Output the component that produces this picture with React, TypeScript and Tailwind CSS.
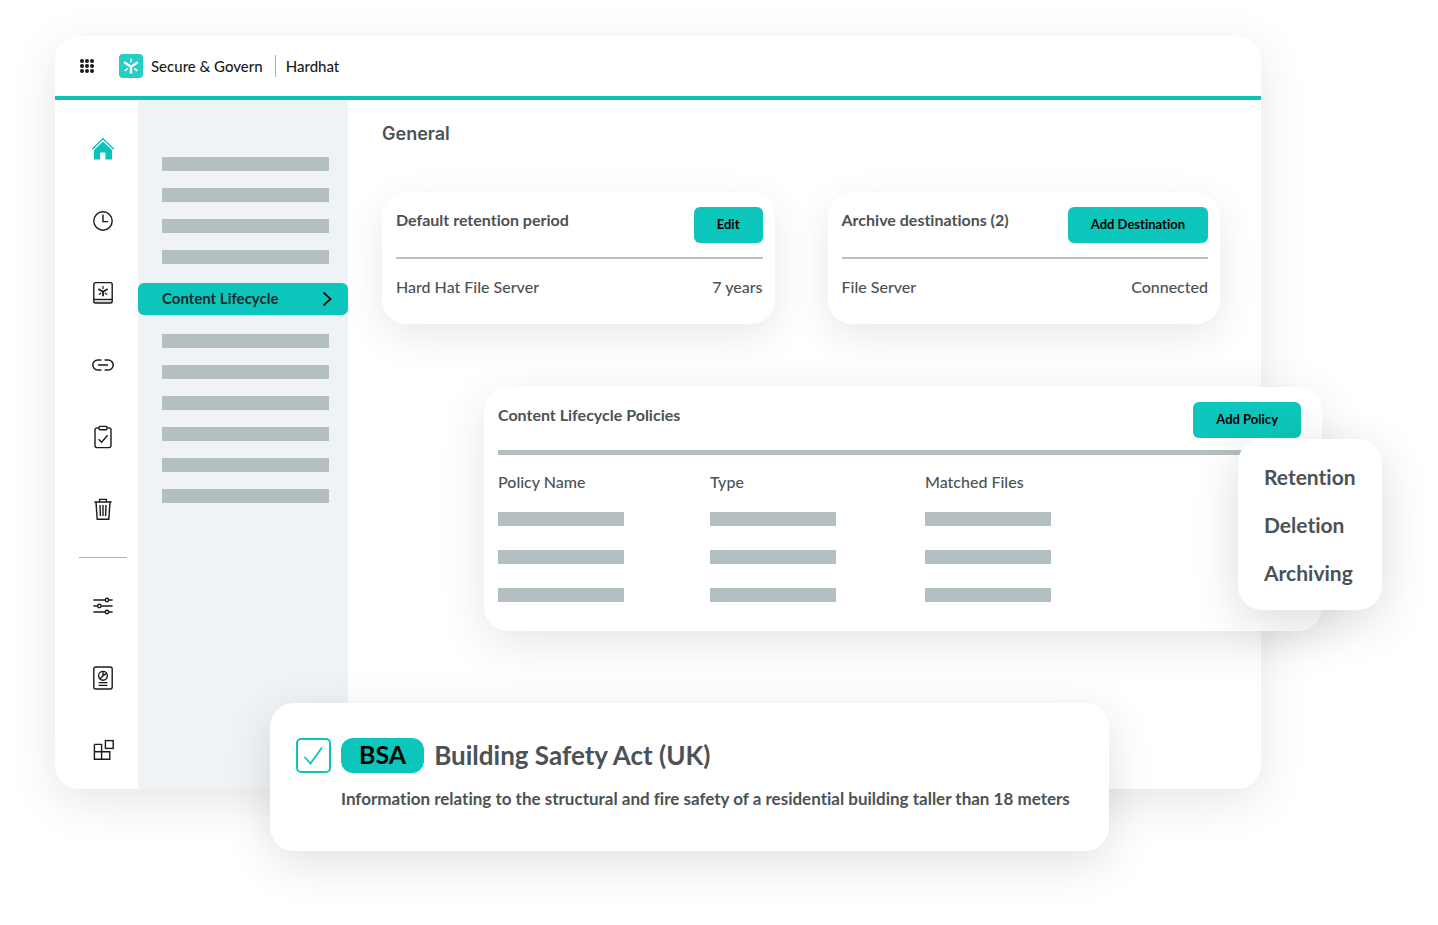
import React, { useState } from 'react';

type IconProps = { className?: string };

const Star: React.FC<IconProps> = ({ className }) => (
  <svg viewBox="0 0 24 24" fill="none" stroke="currentColor" className={className}>
    <path d="M12 12.4V19.6M12 12.8 5.2 8.2M12 12.8l6.8-4.6" strokeWidth="2.4" />
    <path d="M12 4.4v4M5.6 16.8l3.4-2.4M18.4 16.800l-3.400-2.400" strokeWidth="1.5" />
  </svg>
);

const HomeIcon = () => (
  <svg width="24" height="24" viewBox="0 0 24 24" fill="none">
    <path d="M1.2 12.2 12 1.8l10.8 10.4" stroke="#0dc3b7" strokeWidth="1.5" />
    <path d="M12 4.6 3 13v9.4h6.2v-7h5.2v7H21V13z" fill="#0dc3b7" />
  </svg>
);

const ClockIcon = () => (
  <svg width="24" height="24" viewBox="0 0 24 24" fill="none" stroke="#1a1a1a" strokeWidth="1.4">
    <circle cx="12" cy="12" r="9.2" />
    <path d="M12 5.4v7.2h5.2" />
  </svg>
);

const BookIcon = () => (
  <svg width="24" height="24" viewBox="0 0 24 24" fill="none" stroke="#1a1a1a" strokeWidth="1.4">
    <path d="M2.8 18.2h18.4v3.4H2.8z" fill="#d5d5d5" stroke="none" />
    <rect x="2.8" y="1.6" width="18.4" height="20.4" rx="1.8" />
    <path d="M2.8 18.4h18.4" strokeWidth="1.2" />
    <path d="M12 10.6v4.6M12 10.800 7.400 8M12 10.800l4.600-2.800" strokeWidth="1.8" />
    <path d="M12 5v3M7.800 13.600l2.400-1.600M16.200 13.600l-2.400-1.600" strokeWidth="1.2" />
  </svg>
);

const LinkIcon = () => (
  <svg width="24" height="24" viewBox="0 0 24 24" fill="none" stroke="#1a1a1a" strokeWidth="1.5">
    <path d="M10.4 7H6.8a5 5 0 0 0 0 10h3.6M13.6 7h3.6a5 5 0 0 1 0 10h-3.6M7 12h10" />
  </svg>
);

const ClipboardIcon = () => (
  <svg width="24" height="24" viewBox="0 0 24 24" fill="none" stroke="#1a1a1a" strokeWidth="1.4">
    <path d="M8.2 2.9H6a2 2 0 0 0-2 2v15.700a2 2 0 0 0 2 2h12a2 2 0 0 0 2-2V4.900a2 2 0 0 0-2-2h-2.200" />
    <rect x="8" y="1.400" width="8" height="3.400" rx="1" />
    <path d="m7.600 14.200 3 3 6-7" />
  </svg>
);

const TrashIcon = () => (
  <svg width="24" height="24" viewBox="0 0 24 24" fill="none" stroke="#1a1a1a" strokeWidth="1.4">
    <path d="M3.400 5h17.200M8.600 5V2.400h6.800V5M5 5l1.200 17.200h11.600L19 5M9 8l.4 11M12 8v11M15 8l-.4 11" />
  </svg>
);

const SlidersIcon = () => (
  <svg width="24" height="24" viewBox="0 0 24 24" fill="none" stroke="#1a1a1a" strokeWidth="1.4">
    <path d="M2.400 6h11.800M18 6h3.600M2.400 12h4M10.200 12h11.400M2.400 18h11.800M18 18h3.600" />
    <circle cx="16" cy="6" r="1.700" />
    <circle cx="8.300" cy="12" r="1.700" />
    <circle cx="16" cy="18" r="1.700" />
  </svg>
);

const ReportIcon = () => (
  <svg width="24" height="24" viewBox="0 0 24 24" fill="none" stroke="#1a1a1a" strokeWidth="1.4">
    <rect x="2.800" y="1" width="18.400" height="22" rx="2" />
    <circle cx="12" cy="9.800" r="4.400" />
    <path d="M12 5.400v4.400l3.400-2.400M12 9.800l-3 3M7.600 16.600h8.800M7.600 19.400h8.800" />
  </svg>
);

const BlocksIcon = () => (
  <svg width="24" height="24" viewBox="0 0 24 24" fill="none" stroke="#1a1a1a" strokeWidth="1.4">
    <path d="M3.400 6.400h7.200v14.800M3.400 6.400v14.800h15.400v-7.400H3.400" />
    <rect x="14.400" y="2.600" width="7.800" height="7.800" />
  </svg>
);

const mainNav = [
  { name: 'Home', icon: HomeIcon },
  { name: 'Recent', icon: ClockIcon },
  { name: 'Library', icon: BookIcon },
  { name: 'Links', icon: LinkIcon },
  { name: 'Tasks', icon: ClipboardIcon },
  { name: 'Trash', icon: TrashIcon },
];

const toolsNav = [
  { name: 'Settings', icon: SlidersIcon },
  { name: 'Reports', icon: ReportIcon },
  { name: 'Apps', icon: BlocksIcon },
];

const NavButton: React.FC<{ name: string; icon: React.FC }> = ({ name, icon: Icon }) => (
  <button type="button" aria-label={name} className="flex size-12 items-center justify-center">
    <Icon />
  </button>
);

const PlaceholderLinks: React.FC<{ count: number }> = ({ count }) => (
  <div className="flex flex-col gap-[17px] pl-6 pr-[19px]">
    {Array.from({ length: count }, (_, i) => (
      <div key={i} className="h-[14px] bg-[#b4bfc1]" />
    ))}
  </div>
);

const ActionButton: React.FC<{ children: React.ReactNode }> = ({ children }) => (
  <button
    type="button"
    className="h-9 shrink-0 rounded-md bg-[#0dc6bb] px-[23px] text-[13px] font-bold whitespace-nowrap text-black"
  >
    {children}
  </button>
);

interface InfoCardProps {
  title: string;
  action: string;
  label: string;
  value: string;
}

const InfoCard: React.FC<InfoCardProps> = ({ title, action, label, value }) => (
  <section className="rounded-3xl bg-white pt-[15px] pr-3 pb-[25px] pl-[14px] shadow-[0_12px_40px_rgba(0,0,0,0.09)]">
    <div className="flex items-start justify-between border-b-2 border-[#bdc1c2] pb-[14px]">
      <h2 className="text-[16px] leading-[26px] font-bold">{title}</h2>
      <ActionButton>{action}</ActionButton>
    </div>
    <div className="mt-4 flex justify-between text-[16px] leading-6 font-medium">
      <span>{label}</span>
      <span>{value}</span>
    </div>
  </section>
);

const App: React.FC = () => {
  const [checked, setChecked] = useState(true);

  return (
    <div className="min-h-screen bg-white pt-9 pr-[177px] pb-[74px] pl-[55px] font-['Lato','Liberation_Sans',sans-serif] text-[#4b5254] [font-variant-ligatures:none]">
      <div className="rounded-3xl bg-white shadow-[0_12px_48px_rgba(0,0,0,0.1)]">
        <header className="flex h-16 items-center border-b-4 border-[#0dc3b7] pl-6 text-[15px] font-medium text-[#1a1a1a]">
          <button type="button" aria-label="Apps menu">
            <svg width="16" height="16" viewBox="0 0 16 16" fill="#1a1a1a">
              {[3, 8, 13].map((y) => [3, 8, 13].map((x) => <circle key={`${x}-${y}`} cx={x} cy={y} r="2" />))}
            </svg>
          </button>
          <div className="ml-6 flex size-6 items-center justify-center rounded bg-[#26cdc2] text-white">
            <Star className="size-6" />
          </div>
          <span className="ml-2">Secure &amp; Govern</span>
          <span className="ml-3 border-l border-[#b0b0b0] pl-[10px]">Hardhat</span>
        </header>

        <div className="flex">
          <nav className="flex w-[83px] shrink-0 flex-col gap-6 pt-[25px] pb-[15px] pl-6">
            {mainNav.map((item) => (
              <NavButton key={item.name} {...item} />
            ))}
            <div className="h-px w-12 bg-[#b0b0b0]" />
            {toolsNav.map((item) => (
              <NavButton key={item.name} {...item} />
            ))}
          </nav>

          <aside className="w-[210px] shrink-0 bg-[#eff3f6] pt-[57px]">
            <PlaceholderLinks count={4} />
            <a
              href="#content-lifecycle"
              className="my-[19px] flex h-8 items-center justify-between rounded-md bg-[#0dc6bb] pr-4 pl-6 text-[15px] leading-5 font-bold text-[#1a2b2d]"
            >
              <span className="pb-[3px]">Content Lifecycle</span>
              <svg width="10" height="16" viewBox="0 0 10 16" fill="none" stroke="#111" strokeWidth="1.8">
                <path d="m1.500 1.500 7 6.500-7 6.500" />
              </svg>
            </a>
            <PlaceholderLinks count={6} />
          </aside>

          <main className="min-w-0 flex-1 pt-[22px] pr-[41px] pl-[34px]">
            <h1 className="font-['Inter','Liberation_Sans',sans-serif] text-[18px] leading-6 font-semibold">General</h1>

            <div className="mt-[46px] grid grid-cols-2 gap-[53px]">
              <InfoCard title="Default retention period" action="Edit" label="Hard Hat File Server" value="7 years" />
              <InfoCard title="Archive destinations (2)" action="Add Destination" label="File Server" value="Connected" />
            </div>

            <section className="relative mt-[63px] -mr-[102px] ml-[102px] rounded-3xl bg-white pt-[15px] pr-[21px] pb-[17px] pl-[14px] shadow-[0_12px_48px_rgba(0,0,0,0.1)]">
              <div className="flex items-start justify-between border-b-[5px] border-[#b4bfc1] pb-3">
                <h2 className="text-[16px] leading-[26px] font-bold">Content Lifecycle Policies</h2>
                <ActionButton>Add Policy</ActionButton>
              </div>
              <table className="mt-[15px] w-full table-fixed text-left text-[16px]">
                <thead>
                  <tr>
                    <th className="w-[212px] p-0 pb-[6px] leading-6 font-medium">Policy Name</th>
                    <th className="w-[215px] p-0 pb-[6px] leading-6 font-medium">Type</th>
                    <th className="p-0 pb-[6px] leading-6 font-medium">Matched Files</th>
                  </tr>
                </thead>
                <tbody>
                  {[0, 1, 2].map((row) => (
                    <tr key={row} className="h-[38px]">
                      {[0, 1, 2].map((col) => (
                        <td key={col} className="p-0">
                          <div className="h-[14px] w-[126px] bg-[#b4bfc1]" />
                        </td>
                      ))}
                    </tr>
                  ))}
                </tbody>
              </table>

              {/* Add Policy menu */}
              <div className="absolute top-[52px] -right-[60px] flex w-36 flex-col rounded-3xl bg-white pt-[14px] pb-[13px] shadow-[0_12px_48px_rgba(0,0,0,0.14)]">
                {['Retention', 'Deletion', 'Archiving'].map((item) => (
                  <button key={item} type="button" className="h-12 pl-[26px] text-left text-[21px] font-bold">
                    {item}
                  </button>
                ))}
              </div>
            </section>
          </main>
        </div>
      </div>

      <section className="relative -mt-[86px] mr-[152px] ml-[215px] rounded-3xl bg-white pt-[34px] pr-5 pb-[38px] pl-[26px] shadow-[0_12px_48px_rgba(0,0,0,0.12)]">
        <label className="flex h-9 items-center">
          <span className="relative size-[35px]">
            <input
              type="checkbox"
              checked={checked}
              onChange={(e) => setChecked(e.target.checked)}
              className="block size-full appearance-none rounded-[5px] border-2 border-[#0dc6bb]"
            />
            {checked && (
              <svg viewBox="0 0 35 35" fill="none" stroke="#0dc3b7" strokeWidth="1.8" className="pointer-events-none absolute inset-0">
                <path d="m8.500 19 6 6.500L26 9.500" />
              </svg>
            )}
          </span>
          <span className="ml-[10px] flex h-[35px] items-center rounded-xl bg-[#0dc6bb] px-[18px] text-[25px] font-bold text-black">
            BSA
          </span>
          <span className="ml-[10px] text-[26px] leading-9 font-bold">Building Safety Act (UK)</span>
        </label>
        <p className="mt-3 pl-[45px] text-[17px] leading-7 font-bold">
          Information relating to the structural and fire safety of a residential building taller than 18 meters
        </p>
      </section>
    </div>
  );
};

export default App;
